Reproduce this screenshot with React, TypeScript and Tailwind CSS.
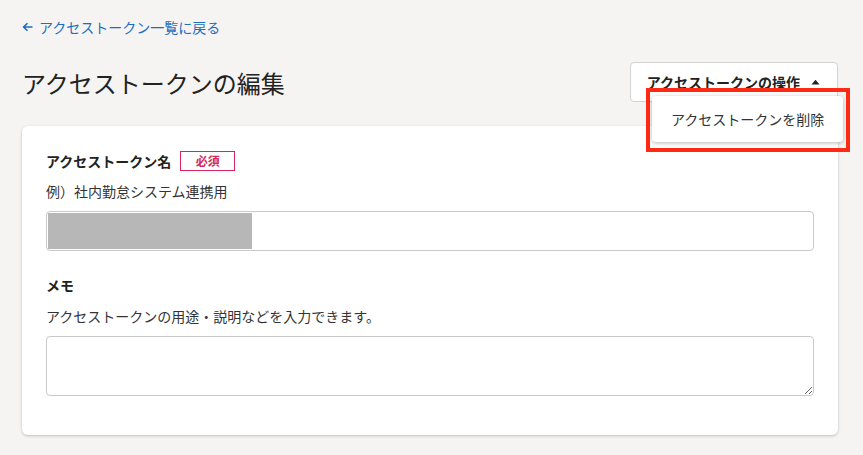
import React from "react";

const TokenActions: React.FC = () => {
	return (
		<div className="relative">
			<button className="flex h-[40px] items-center gap-[11px] rounded-[4px] border border-[#d4d2cf] bg-white pl-[16px] pr-[17px] text-[14px] font-bold text-[#222]">
				<span>アクセストークンの操作</span>
				<svg width="9" height="6" viewBox="0 0 9 6" className="mt-[-1px]">
					<path d="M0.5 5.5 L4.5 0.8 L8.5 5.5 Z" fill="#222" />
				</svg>
			</button>

			{/* Menu, outlined in red */}
			<div className="absolute right-[-12px] top-[26px] z-10 border-[4px] border-[#ff2a14] pb-[6px] pl-[2px] pr-[3px] pt-[4px]">
				<div className="flex h-[46px] w-[191px] items-center rounded-[4px] bg-white pl-[19px] text-[14px] text-[#333] shadow-[0_1px_4px_rgba(0,0,0,0.28)]">
					アクセストークンを削除
				</div>
			</div>
		</div>
	);
};

const App: React.FC = () => {
	return (
		<div className="min-h-[455px] bg-[#f5f4f2] pl-[22px] pr-[25px] pt-[17px] font-['Noto_Sans_CJK_JP',sans-serif]">
			<a
				href="#"
				className="flex h-5 items-center gap-[5px] text-[14px] text-[#1c6fc0]">
				<svg width="12" height="12" viewBox="0 0 12 12" fill="none">
					<path
						d="M10.5 6 H1.8 M5.5 2.2 L1.6 6 L5.5 9.8"
						stroke="#1c6fc0"
						strokeWidth="1.6"
					/>
				</svg>
				<span>アクセストークン一覧に戻る</span>
			</a>

			<div className="mt-[25px] flex items-center justify-between">
				<h1 className="text-[24px] font-normal leading-[39px] text-[#222]">
					アクセストークンの編集
				</h1>
				<TokenActions />
			</div>

			<div className="mt-[24px] rounded-[6px] bg-white px-6 pb-[39px] pt-[25px] shadow-[0_1px_3px_rgba(0,0,0,0.22)]">
				<div className="flex items-center gap-[9px]">
					<span className="text-[14px] font-bold leading-5 text-[#222]">
						アクセストークン名
					</span>
					<span className="flex h-[20px] w-[55px] items-center justify-center border border-[#d8265c] text-[12px] font-bold text-[#d8265c]">
						必須
					</span>
				</div>
				<p className="mt-[10px] text-[14px] leading-5 text-[#333]">
					例）社内勤怠システム連携用
				</p>
				<div className="mt-[10px] flex h-[40px] items-stretch rounded-[4px] border border-[#c9c9c9] bg-white p-[1px]">
					<div className="w-[204px] bg-[#b7b7b7]" />
				</div>

				<p className="mt-[24px] text-[14px] font-bold leading-5 text-[#222]">メモ</p>
				<p className="mt-[11px] text-[14px] leading-5 text-[#333]">
					アクセストークンの用途・説明などを入力できます。
				</p>
				<textarea className="mt-[10px] block h-[60px] w-full rounded-[4px] border border-[#c9c9c9] bg-white px-2 py-1 text-[14px]" />
			</div>
		</div>
	);
};

export default App;
